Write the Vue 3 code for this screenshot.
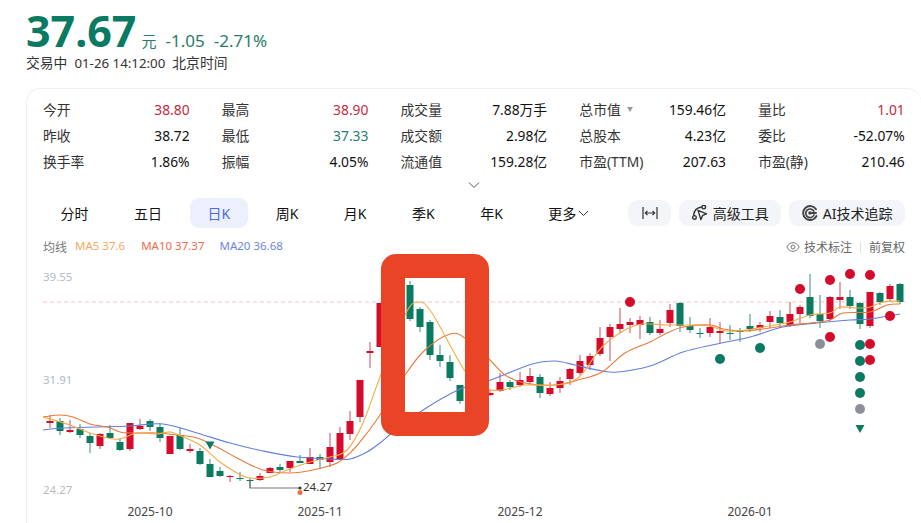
<template>
  <div class="page">
    <header class="quote">
      <div class="quote-main">
        <span class="price">37.67</span>
        <span class="unit">元</span>
        <span class="change">-1.05</span>
        <span class="change">-2.71%</span>
      </div>
      <div class="quote-sub">
        <span>交易中</span>
        <span class="quote-time">01-26 14:12:00</span>
        <span>北京时间</span>
      </div>
    </header>

    <section class="card">
      <div class="stats">
        <div v-for="s in stats" :key="s.label" class="stat">
          <span class="stat-label">{{ s.label }}<i v-if="s.caret" class="caret"></i></span>
          <span class="stat-value" :class="s.tone">{{ s.value }}</span>
        </div>
      </div>

      <div class="expand">
        <svg width="12" height="8" viewBox="0 0 12 8"><path d="M1 1.5 6 6.5 11 1.5" fill="none" stroke="#555" stroke-width="1"/></svg>
      </div>

      <div class="toolbar">
        <div class="tabs">
          <span v-for="t in tabs" :key="t" class="tab" :class="{ 'tab--active': t === '日K' }">{{ t }}</span>
          <span class="tab tab--more">更多<svg width="11" height="7" viewBox="0 0 11 7"><path d="M1 1 5.5 5.5 10 1" fill="none" stroke="#333" stroke-width="1"/></svg></span>
        </div>
        <div class="tools">
          <button class="tool tool--icon">
            <svg width="16" height="14" viewBox="0 0 16 14"><path d="M1 1v12M15 1v12M3.5 7h9M5.5 4.8 3.3 7l2.2 2.2M10.500 4.800 12.700 7l-2.200 2.200" fill="none" stroke="#333" stroke-width="1.2"/></svg>
          </button>
          <button class="tool">
            <svg width="16" height="16" viewBox="0 -1 15 15"><g fill="none" stroke="#333" stroke-width="1.3"><path d="M1.500 8.800C1.800 4.500 4.500 1.500 9.200 .9"/><circle cx="2.300" cy="10.700" r="1.700"/><circle cx="11" cy=".9" r="1.700"/><path d="M5.700 4 13.700 7.300 10 8.700 8.300 12.700Z" stroke-linejoin="round"/></g></svg>
            高级工具
          </button>
          <button class="tool">
            <svg width="16" height="16" viewBox="0 0 16 16"><g fill="none" stroke="#444" stroke-linecap="round"><path d="M14 4.200A7 7 0 1 0 14.500 11" stroke-width="1.900"/><path d="M11.800 6.200A4.300 4.300 0 1 0 12 10" stroke-width="1.700"/><path d="M8.200 8H14" stroke-width="2"/></g><circle cx="8" cy="8" r="1.800" fill="#444"/></svg>
            AI技术追踪
          </button>
        </div>
      </div>

      <div class="legend">
        <div class="legend-left">
          <span class="legend-title">均线</span>
          <span class="ma5">MA5 37.6</span>
          <span class="ma10">MA10 37.37</span>
          <span class="ma20">MA20 36.68</span>
        </div>
        <div class="legend-right">
          <svg width="14" height="10" viewBox="0 0 14 10"><g fill="none" stroke="#777" stroke-width="1"><path d="M.8 5C2.6 2 4.6.7 7 .7S11.400 2 13.200 5C11.400 8 9.400 9.300 7 9.300S2.600 8 .8 5Z"/><circle cx="7" cy="5" r="2"/></g></svg>
          <span>技术标注</span>
          <i class="legend-sep"></i>
          <span>前复权</span>
        </div>
      </div>

      <svg class="chart" width="894" height="256" viewBox="27 267 894 256">
        <line x1="43" y1="302" x2="906" y2="302" stroke="#f0c4c6" stroke-dasharray="4 3"/>

        <text v-for="a in axisY" :key="a.t" x="43" :y="a.y" class="axis-y">{{ a.t }}</text>
        <text v-for="a in axisX" :key="a.t" :x="a.x" y="516" text-anchor="middle" class="axis-x">{{ a.t }}</text>

        <g v-for="c in candles" :key="c.x">
          <line :x1="c.x" :x2="c.x" :y1="c.hi" :y2="c.lo" :stroke="c.up ? '#d4808c' : '#6fae9f'" stroke-width="1.4"/>
          <rect :x="c.x - 3.5" :y="c.top" width="7" :height="c.bot - c.top" :fill="c.up ? '#d50b2b' : '#0a7a60'"/>
        </g>

        <path :d="ma20Path" fill="none" stroke="#5f80dc" stroke-width="1.1"/>
        <path :d="ma10Path" fill="none" stroke="#e9783a" stroke-width="1.1"/>
        <path :d="ma5Path" fill="none" stroke="#f3ac47" stroke-width="1.1"/>

        <circle v-for="d in dots" :key="d.x + '-' + d.y" :cx="d.x" :cy="d.y" r="5" :fill="dotColors[d.k]"/>
        <path d="M205.500 441.500h9l-4.500 8z" fill="#0a7a60"/>
        <path d="M855.500 425h9l-4.500 8z" fill="#0a7a60"/>

        <path d="M250 481V488H300" fill="none" stroke="#777" stroke-width="1.2"/>
        <circle cx="300" cy="488" r="1.6" fill="#333"/>
        <circle cx="300" cy="492.500" r="2.500" fill="#ee7040"/>
        <text x="303" y="491" class="low-label">24.27</text>
      </svg>
    </section>

    <div class="marker"></div>
  </div>
</template>

<script setup>
const stats = [
  { label: '今开', value: '38.80', tone: 'up' },
  { label: '最高', value: '38.90', tone: 'up' },
  { label: '成交量', value: '7.88万手' },
  { label: '总市值', value: '159.46亿', caret: true },
  { label: '量比', value: '1.01', tone: 'up' },
  { label: '昨收', value: '38.72' },
  { label: '最低', value: '37.33', tone: 'down' },
  { label: '成交额', value: '2.98亿' },
  { label: '总股本', value: '4.23亿' },
  { label: '委比', value: '-52.07%' },
  { label: '换手率', value: '1.86%' },
  { label: '振幅', value: '4.05%' },
  { label: '流通值', value: '159.28亿' },
  { label: '市盈(TTM)', value: '207.63' },
  { label: '市盈(静)', value: '210.46' },
]

const tabs = ['分时', '五日', '日K', '周K', '月K', '季K', '年K']

const axisY = [
  { t: '39.55', y: 281 },
  { t: '31.91', y: 384 },
  { t: '24.27', y: 494 },
]
const axisX = [
  { t: '2025-10', x: 150 },
  { t: '2025-11', x: 320 },
  { t: '2025-12', x: 520 },
  { t: '2026-01', x: 750 },
]

// x, wick high, wick low, body top, body bottom, red?
const raw = [
  [50, 415, 428, 421, 423, 1], [60, 418, 435, 421, 431, 0], [70, 420, 433, 430, 432, 1],
  [80, 424, 438, 429, 435, 0], [90, 433, 453, 436, 443, 0], [100, 433, 449, 434, 446, 1],
  [110, 425, 438, 433, 438, 0], [120, 438, 451, 442, 450, 0], [130, 423, 451, 423, 449, 1],
  [140, 419, 430, 426, 429, 1], [150, 419, 431, 421, 427, 0], [160, 423, 442, 427, 438, 0],
  [170, 436, 454, 436, 454, 1], [180, 428, 450, 435, 449, 0], [190, 444, 453, 449, 451, 1],
  [200, 448, 465, 451, 464, 0], [210, 459, 477, 464, 477, 0], [220, 467, 477, 471, 476, 0],
  [230, 475, 482, 476, 477, 1], [240, 472, 481, 478, 479, 0], [250, 478, 488, 480, 481, 0],
  [260, 473, 481, 476, 480, 1], [270, 467, 473, 468, 473, 1], [280, 464, 472, 467, 470, 0],
  [290, 461, 472, 461, 468, 1], [300, 455, 463, 461, 463, 0], [310, 448, 464, 457, 464, 1],
  [320, 454, 469, 457, 460, 0], [330, 433, 467, 447, 462, 1], [340, 427, 459, 433, 459, 1],
  [350, 411, 440, 421, 434, 1], [360, 380, 422, 380, 417, 1], [370, 342, 368, 351, 353, 1],
  [380, 303, 347, 303, 347, 1], [410, 281, 321, 285, 319, 0], [420, 307, 332, 309, 327, 0],
  [430, 320, 360, 322, 355, 0], [440, 345, 367, 355, 361, 0], [450, 355, 381, 362, 378, 0],
  [460, 385, 404, 385, 401, 0], [490, 390, 396, 393, 395, 1], [500, 373, 392, 382, 391, 1],
  [510, 380, 390, 382, 387, 0], [520, 372, 387, 380, 385, 1], [530, 368, 385, 376, 382, 1],
  [540, 374, 398, 377, 393, 0], [550, 382, 396, 388, 394, 1], [560, 377, 393, 381, 388, 1],
  [570, 368, 385, 369, 379, 1], [580, 355, 375, 361, 373, 1], [590, 353, 370, 356, 365, 1],
  [600, 327, 356, 338, 354, 1], [610, 324, 361, 327, 337, 1], [620, 308, 333, 324, 329, 1],
  [630, 318, 333, 322, 325, 1], [640, 316, 339, 320, 325, 1], [650, 317, 335, 322, 333, 0],
  [660, 320, 335, 329, 333, 1], [670, 304, 327, 310, 323, 1], [680, 302, 332, 303, 326, 0],
  [690, 317, 333, 326, 330, 0], [700, 328, 338, 333, 334, 0], [710, 318, 337, 327, 333, 1],
  [720, 322, 343, 331, 333, 1], [730, 325, 340, 333, 334, 0], [740, 328, 342, 330, 332, 0],
  [750, 314, 332, 326, 329, 0], [760, 322, 332, 325, 328, 1], [770, 311, 328, 316, 322, 1],
  [780, 310, 328, 317, 323, 0], [790, 302, 327, 314, 326, 1], [800, 305, 323, 307, 314, 1],
  [810, 274, 318, 297, 316, 0], [820, 295, 328, 314, 321, 0], [830, 296, 321, 297, 319, 1],
  [840, 282, 309, 297, 300, 1], [850, 290, 309, 297, 306, 0], [860, 302, 329, 303, 324, 0],
  [870, 292, 328, 292, 326, 1], [880, 292, 305, 293, 302, 0], [890, 284, 301, 286, 299, 1],
  [900, 283, 304, 284, 302, 0],
]
const candles = raw.map(([x, hi, lo, top, bot, up]) => ({ x, hi, lo, top, bot, up }))

const dotColors = { r: '#d50b2b', g: '#0a7a60', n: '#8c8f99' }
const dots = [
  { x: 630, y: 302, k: 'r' }, { x: 800, y: 289, k: 'r' }, { x: 830, y: 280, k: 'r' },
  { x: 850, y: 274, k: 'r' }, { x: 870, y: 275, k: 'r' }, { x: 890, y: 316, k: 'r' },
  { x: 830, y: 337, k: 'r' }, { x: 870, y: 344, k: 'r' }, { x: 870, y: 360, k: 'r' },
  { x: 820, y: 344, k: 'n' }, { x: 860, y: 409, k: 'n' },
  { x: 720, y: 359, k: 'g' }, { x: 760, y: 348, k: 'g' }, { x: 860, y: 345, k: 'g' },
  { x: 860, y: 361, k: 'g' }, { x: 860, y: 377, k: 'g' }, { x: 860, y: 393, k: 'g' },
]

const ma5 = [
  [43, 417], [70, 425], [90, 433], [113, 439], [123, 438], [137, 433], [157, 434], [170, 432],
  [183, 437], [200, 445], [220, 462], [237, 473], [250, 478], [270, 477], [287, 470], [310, 462],
  [330, 457], [347, 450], [363, 423], [380, 377], [405, 315], [418, 302], [432, 313], [465, 371],
  [485, 388], [502, 390], [525, 385], [555, 385], [578, 378], [602, 347], [625, 330], [642, 324],
  [667, 325], [700, 325], [710, 326], [727, 331], [747, 330], [763, 327], [790, 322], [810, 315],
  [830, 313], [840, 307], [857, 308], [870, 307], [883, 302], [900, 301],
]
const ma10 = [
  [43, 417], [60, 415], [73, 417], [90, 424], [107, 427], [120, 432], [130, 433], [157, 433],
  [177, 435], [197, 438], [217, 447], [237, 458], [263, 470], [290, 473], [313, 470], [337, 463],
  [353, 450], [367, 433], [380, 415], [405, 375], [425, 350], [450, 334], [465, 338], [488, 358],
  [505, 375], [525, 383], [555, 385], [578, 380], [602, 372], [625, 353], [650, 342], [667, 333],
  [683, 327], [710, 325], [723, 329], [743, 331], [763, 329], [790, 325], [810, 323], [830, 320],
  [843, 313], [870, 312], [887, 305], [900, 304],
]
const ma20 = [
  [43, 430], [63, 428], [97, 427], [130, 426], [163, 424], [197, 433], [230, 443], [263, 451],
  [297, 457], [330, 459], [350, 459], [367, 452], [380, 443], [392, 433], [420, 412], [458, 390],
  [488, 381], [532, 364], [555, 361], [575, 365], [602, 371], [618, 372], [650, 366], [683, 352],
  [717, 344], [750, 337], [783, 327], [817, 323], [850, 320], [870, 319], [900, 314],
]

// catmull-rom through the hand-read points
function smooth(pts) {
  let d = `M${pts[0][0]} ${pts[0][1]}`
  for (let i = 0; i < pts.length - 1; i++) {
    const p0 = pts[i - 1] || pts[i]
    const p1 = pts[i]
    const p2 = pts[i + 1]
    const p3 = pts[i + 2] || p2
    const c1x = p1[0] + (p2[0] - p0[0]) / 6
    const c1y = p1[1] + (p2[1] - p0[1]) / 6
    const c2x = p2[0] - (p3[0] - p1[0]) / 6
    const c2y = p2[1] - (p3[1] - p1[1]) / 6
    d += `C${c1x.toFixed(1)} ${c1y.toFixed(1)} ${c2x.toFixed(1)} ${c2y.toFixed(1)} ${p2[0]} ${p2[1]}`
  }
  return d
}

const ma5Path = smooth(ma5)
const ma10Path = smooth(ma10)
const ma20Path = smooth(ma20)
</script>

<style>
html, body { margin: 0; background: #fff; overflow: hidden; }
</style>

<style scoped>
.page {
  position: relative;
  width: 921px;
  height: 523px;
  overflow: hidden;
  padding: 6px 0 0 26px;
  box-sizing: border-box;
  font-family: "Noto Sans", "Noto Sans CJK SC", sans-serif;
  color: #222;
}

.quote-main {
  display: flex;
  align-items: baseline;
  height: 48px;
  line-height: 50px;
}
.price {
  font-size: 43px;
  font-weight: 700;
  color: #0a7a62;
  margin-right: 5px;
}
.unit { font-size: 15px; color: #2a7c68; margin-right: 9px; }
.change { font-size: 17px; color: #2a7c68; margin-right: 9px; }
.quote-sub {
  display: flex;
  gap: 7px;
  font-size: 13.8px;
  line-height: 18px;
  color: #333;
}
.quote-time { font-size: 13.3px; }

.card {
  margin-top: 16px;
  width: 895px;
  height: 440px;
  box-sizing: border-box;
  border: 1px solid #eeeff2;
  border-bottom: 0;
  border-right: 0;
  border-radius: 14px 14px 0 0;
}

.stats {
  display: grid;
  grid-template-columns: repeat(5, 146.6px);
  column-gap: 32.2px;
  grid-auto-rows: 26px;
  padding: 7px 0 0 16px;
}
.stat {
  display: flex;
  justify-content: space-between;
  align-items: center;
  font-size: 13.8px;
}
.stat-label { color: #333; display: flex; align-items: center; }
.stat-value { color: #111; }
.stat-value.up { color: #c62a3c; }
.stat-value.down { color: #1f7d6a; }
.caret {
  width: 0;
  height: 0;
  margin-left: 6px;
  border: 3px solid transparent;
  border-top: 5px solid #999;
  border-bottom: 0;
}

.expand {
  display: flex;
  justify-content: center;
  height: 10px;
  padding: 7px 0 0 0;
  margin-left: -1px;
}

.toolbar {
  display: flex;
  justify-content: space-between;
  align-items: center;
  height: 30px;
  margin-top: 7px;
  padding: 0 16px 0 16px;
}
.tabs { display: flex; gap: 10.5px; }
.tab {
  display: flex;
  align-items: center;
  gap: 2px;
  height: 30px;
  padding: 0 17.5px;
  border-radius: 9px;
  font-size: 14px;
  color: #111;
}
.tab--active { background: #ebf0fc; color: #4a6ddb; }
.tab--more { padding-right: 0; }

.tools { display: flex; gap: 8px; }
.tool {
  display: flex;
  align-items: center;
  gap: 5px;
  height: 26px;
  padding: 0 12.5px;
  border: 0;
  border-radius: 9px;
  background: #f3f5f9;
  font-family: inherit;
  font-size: 14px;
  color: #222;
}
.tool--icon { padding: 0 13.5px; }

.legend {
  display: flex;
  justify-content: space-between;
  align-items: center;
  height: 18px;
  margin-top: 10px;
  padding: 0 16px;
  font-size: 11.5px;
}
.legend-left { display: flex; gap: 6px; }
.legend-title { color: #777; font-size: 12px; margin-right: 2px; }
.ma5 { color: #f3a95f; margin-right: 10px; }
.ma10 { color: #ee6a4c; margin-right: 9px; }
.ma20 { color: #6c87e2; }
.legend-right { display: flex; align-items: center; gap: 4px; color: #666; font-size: 12px; }
.legend-sep { width: 1px; height: 11px; background: #e2e2e2; margin: 0 4px; }

.chart { display: block; margin-top: 11px; }
.axis-y { font-size: 11.5px; fill: #b6bac2; }
.axis-x { font-size: 12px; fill: #444; }
.low-label { font-size: 11.5px; fill: #333; }

/* annotation box dropped on top of the screenshot */
.marker {
  position: absolute;
  left: 381px;
  top: 254px;
  width: 108px;
  height: 182px;
  box-sizing: border-box;
  border: 24px solid #ea4426;
  border-radius: 15px;
}
</style>
